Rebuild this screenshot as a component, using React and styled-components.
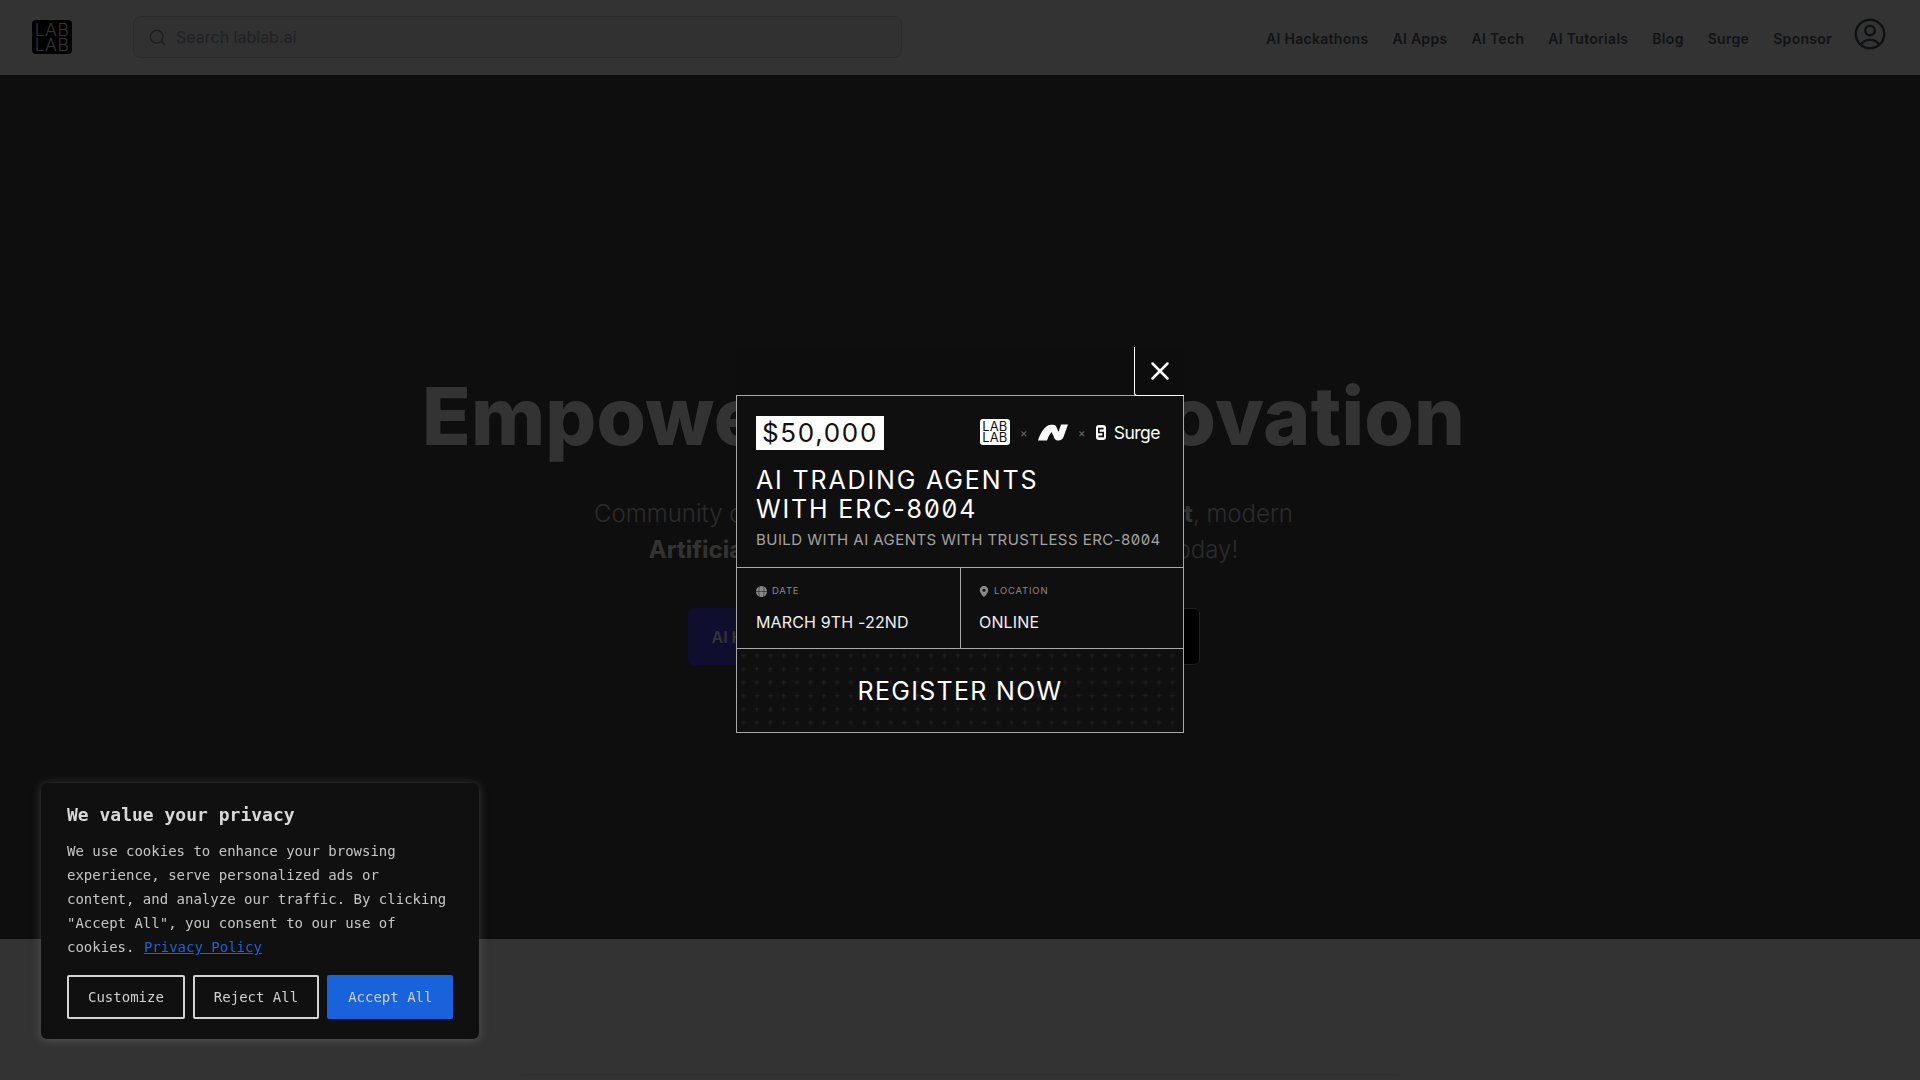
import React from "react";
import styled, { createGlobalStyle } from "styled-components";
import { HiOutlineUserCircle } from "react-icons/hi2";
import { Search, X } from "lucide-react";

const GlobalStyle = createGlobalStyle`
  * { box-sizing: border-box; }
  html, body { margin: 0; height: 100%; overflow: hidden; }
  body { font-family: "Inter", "Liberation Sans", sans-serif; background: #fff; }
`;

const navItems = ["AI Hackathons", "AI Apps", "AI Tech", "AI Tutorials", "Blog", "Surge", "Sponsor"];

function App() {
  return (
    <>
      <GlobalStyle />
      <Page>
        <Header>
          <HeaderLogo>
            <span>LAB</span>
            <span>LAB</span>
          </HeaderLogo>
          <SearchBox>
            <Search size={19} strokeWidth={1.75} />
            <span>Search lablab.ai</span>
          </SearchBox>
          <Nav>
            {navItems.map((item) => (
              <NavLink key={item}>{item}</NavLink>
            ))}
          </Nav>
          <Avatar>
            <HiOutlineUserCircle size={38} />
          </Avatar>
        </Header>
        <Hero>
          <HeroTitle>Empowering AI Innovation</HeroTitle>
          <HeroText>
            Community of makers learning to build with the <b>latest</b>, modern
            <br />
            <b>Artificial Intelligence</b> tools. Join us, and build today!
          </HeroText>
          <HeroButtons>
            <HeroButton $primary>AI Hackathons</HeroButton>
            <HeroButton>AI Tutorials</HeroButton>
          </HeroButtons>
        </Hero>
        <Lower>
          <LowerCard />
        </Lower>
      </Page>

      <Overlay>
        <ModalWrap>
          <CloseRow>
            <CloseButton aria-label="Close">
              <X size={30} strokeWidth={2} />
            </CloseButton>
          </CloseRow>
          <Modal>
            <Intro>
              <TopRow>
                <Prize>$50,000</Prize>
                <Logos>
                  <SmallLogo>
                    <span>LAB</span>
                    <span>LAB</span>
                  </SmallLogo>
                  <Times>×</Times>
                  <svg width="30" height="17" viewBox="0 0 30 16" fill="#fff">
                    <path d="M0 16C1.5 10 6 3 9.5 1.2C12 0 16.5 -.3 18 1.5L20.5 7.5L23 0H30L25.5 12.5C24.5 15.5 21 16.8 18 15.5C16.5 14.8 16 13 15.5 11.5L13.5 7.5C11.5 10 10 13 9 16Z" />
                  </svg>
                  <Times>×</Times>
                  <SurgeLogo>
                    <svg width="10" height="15" viewBox="0 0 10 15">
                      <rect width="10" height="15" rx="3" fill="#fff" />
                      <path d="M7.6 3.6H2.8V7.5H7.2V11.4H2.4" fill="none" stroke="#0f0f0f" strokeWidth="1.6" />
                    </svg>
                    <span>Surge</span>
                  </SurgeLogo>
                </Logos>
              </TopRow>
              <ModalTitle>
                AI TRADING AGENTS
                <br />
                WITH ERC-8004
              </ModalTitle>
              <ModalSub>BUILD WITH AI AGENTS WITH TRUSTLESS ERC-8004</ModalSub>
            </Intro>
            <Details>
              <Detail>
                <DetailLabel>
                  <svg width="11" height="11" viewBox="0 0 11 11">
                    <circle cx="5.5" cy="5.5" r="5.5" fill="#8a8a8a" />
                    <path d="M0 5.5H11M3.6 .5C2.6 3.5 2.6 7.5 3.6 10.5M7.4 .5C8.4 3.5 8.4 7.5 7.4 10.5" fill="none" stroke="#0f0f0f" strokeWidth=".5" />
                  </svg>
                  DATE
                </DetailLabel>
                <DetailValue>MARCH 9TH -22ND</DetailValue>
              </Detail>
              <Detail>
                <DetailLabel>
                  <svg width="10" height="11" viewBox="0 0 10 12">
                    <path fillRule="evenodd" fill="#8a8a8a" d="M5 0a4.6 4.6 0 0 1 4.6 4.6C9.6 7.8 5 12 5 12S.4 7.8.4 4.6A4.6 4.6 0 0 1 5 0Zm0 3a1.7 1.7 0 1 0 0 3.4A1.7 1.7 0 0 0 5 3Z" />
                  </svg>
                  LOCATION
                </DetailLabel>
                <DetailValue>ONLINE</DetailValue>
              </Detail>
            </Details>
            <Register>
              <PlusGrid width="100%" height="100%">
                <defs>
                  <pattern id="plus" width="13.4" height="13.4" patternUnits="userSpaceOnUse">
                    <path d="M4 6.5H9M6.5 4V9" stroke="#212121" strokeWidth="1" />
                  </pattern>
                </defs>
                <rect width="100%" height="100%" fill="url(#plus)" />
              </PlusGrid>
              <RegisterLabel>REGISTER NOW</RegisterLabel>
            </Register>
          </Modal>
        </ModalWrap>
      </Overlay>

      <CookieCard>
        <CookieTitle>We value your privacy</CookieTitle>
        <CookieText>
          We use cookies to enhance your browsing experience, serve personalized ads or content,
          and analyze our traffic. By clicking "Accept All", you consent to our use of cookies.{" "}
          <a href="#privacy">Privacy Policy</a>
        </CookieText>
        <CookieButtons>
          <CookieButton>Customize</CookieButton>
          <CookieButton>Reject All</CookieButton>
          <CookieButton $accept>Accept All</CookieButton>
        </CookieButtons>
      </CookieCard>
    </>
  );
}

export default App;

const Page = styled.div`
  display: flex;
  flex-direction: column;
  height: 1080px;
  overflow: hidden;
`;

const Header = styled.header`
  height: 75px;
  flex-shrink: 0;
  background: #fff;
  display: flex;
  align-items: center;
  padding: 0 32px 1px;
`;

const HeaderLogo = styled.div`
  width: 40px;
  height: 34px;
  background: #000;
  border-radius: 4px;
  color: #fff;
  display: flex;
  flex-direction: column;
  align-items: center;
  justify-content: center;
  font-size: 17.5px;
  font-weight: 300;
  line-height: 15px;
  letter-spacing: 0.5px;
`;

const SearchBox = styled.div`
  width: 769px;
  height: 42px;
  margin-left: 61px;
  border: 1px solid #d1d5db;
  border-radius: 8px;
  background: #f3f3f3;
  color: #9ca3af;
  display: flex;
  align-items: center;
  gap: 9px;
  padding-left: 14px;
  font-size: 16px;
  svg {
    color: #8b8f96;
  }
`;

const Nav = styled.nav`
  margin-left: auto;
  display: flex;
  gap: 24px;
  padding-top: 3px;
`;

const NavLink = styled.a`
  font-size: 14px;
  font-weight: 600;
  letter-spacing: 0.3px;
  color: #5a5f6a;
`;

const Avatar = styled.div`
  color: #50545c;
  margin-left: 19px;
  margin-right: -1px;
  margin-top: -6px;
  display: flex;
`;

const Hero = styled.section`
  height: 864px;
  flex-shrink: 0;
  background: #464646;
  display: flex;
  flex-direction: column;
  align-items: center;
  padding: 293px 33px 0 0;
`;

const HeroTitle = styled.h1`
  margin: 0;
  font-size: 80px;
  line-height: 96px;
  font-weight: 800;
  letter-spacing: 0.2px;
  color: #fff;
  white-space: nowrap;
`;

const HeroText = styled.p`
  margin: 32px 0 0;
  font-size: 24px;
  line-height: 36px;
  font-weight: 300;
  color: #d4d4d4;
  text-align: center;
  white-space: nowrap;
  b {
    font-weight: 700;
    color: #fff;
  }
`;

const HeroButtons = styled.div`
  margin-top: 40px;
  display: flex;
  gap: 18px;
`;

const HeroButton = styled.a`
  width: 247px;
  height: 57px;
  border-radius: 6px;
  display: flex;
  align-items: center;
  padding-left: 24px;
  font-size: 16px;
  font-weight: 600;
  color: #fff;
  background: ${(p) => (p.$primary ? "#4f46e5" : "#000")};
  border: ${(p) => (p.$primary ? "none" : "1px solid #9ca3af")};
`;

const Lower = styled.section`
  flex: 1;
  background: #fff;
  padding-top: 135px;
  display: flex;
  justify-content: center;
`;

const LowerCard = styled.div`
  width: 886px;
  height: 100px;
  border-top: 1px solid #e5e7eb;
  border-radius: 8px 8px 0 0;
`;

const Overlay = styled.div`
  position: fixed;
  inset: 0;
  z-index: 10;
  background: rgba(0, 0, 0, 0.8);
  display: flex;
  align-items: center;
  justify-content: center;
`;

const ModalWrap = styled.div`
  width: 448px;
  background: #0d0d0d;
`;

const CloseRow = styled.div`
  display: flex;
  justify-content: flex-end;
  height: 48px;
`;

const CloseButton = styled.button`
  width: 50px;
  height: 49px;
  background: transparent;
  border: solid #fff;
  border-width: 0 0 1px 1px;
  border-bottom-left-radius: 3px;
  color: #fff;
  padding: 0;
  position: relative;
  z-index: 1;
  display: flex;
  align-items: center;
  justify-content: center;
`;

const Modal = styled.div`
  border: 1px solid #a9a9a9;
  background: #0f0f0f;
  color: #fff;
  font-feature-settings: "zero";
`;

const Intro = styled.div`
  height: 171px;
  padding: 20px 23px 0 19px;
`;

const TopRow = styled.div`
  display: flex;
  justify-content: space-between;
  align-items: center;
`;

const Prize = styled.div`
  height: 34px;
  width: 128px;
  background: #fff;
  color: #111;
  font-size: 26px;
  line-height: 34px;
  letter-spacing: 1.7px;
  text-align: center;
  font-feature-settings: normal;
`;

const Logos = styled.div`
  display: flex;
  align-items: center;
  gap: 10px;
  padding-bottom: 2px;
`;

const SmallLogo = styled.div`
  width: 30px;
  height: 26px;
  background: #fff;
  border-radius: 3px;
  color: #111;
  display: flex;
  flex-direction: column;
  align-items: center;
  justify-content: center;
  font-size: 13px;
  line-height: 11px;
`;

const Times = styled.span`
  color: #666;
  font-size: 12px;
`;

const SurgeLogo = styled.div`
  display: flex;
  align-items: center;
  gap: 8px;
  font-size: 17.5px;
  font-weight: 400;
  letter-spacing: -0.5px;
`;

const ModalTitle = styled.h2`
  margin: 16px 0 0;
  font-size: 25px;
  line-height: 29px;
  font-weight: 400;
  letter-spacing: 1.85px;
`;

const ModalSub = styled.p`
  margin: 6px 0 0;
  font-size: 15px;
  line-height: 20px;
  letter-spacing: 0.45px;
  color: #a3a3a3;
  white-space: nowrap;
`;

const Details = styled.div`
  display: grid;
  grid-template-columns: 223px 1fr;
  height: 82px;
  border-top: 1px solid #a9a9a9;
  border-bottom: 1px solid #a9a9a9;
`;

const Detail = styled.div`
  padding: 16px 19px 0;
  & + & {
    border-left: 1px solid #a9a9a9;
    padding-left: 18px;
  }
`;

const DetailLabel = styled.div`
  display: flex;
  align-items: center;
  gap: 5px;
  font-size: 9.5px;
  line-height: 14px;
  letter-spacing: 0.8px;
  color: #8a8a8a;
`;

const DetailValue = styled.div`
  margin-top: 13px;
  font-size: 16px;
  line-height: 22px;
  letter-spacing: 0.15px;
  color: #f0f0f0;
`;

const Register = styled.div`
  position: relative;
  height: 83px;
  display: flex;
  align-items: center;
  justify-content: center;
`;

const PlusGrid = styled.svg`
  position: absolute;
  inset: 0;
`;

const RegisterLabel = styled.span`
  position: relative;
  font-size: 25px;
  letter-spacing: 1.3px;
`;

const CookieCard = styled.div`
  position: fixed;
  left: 41px;
  bottom: 41px;
  z-index: 20;
  width: 438px;
  height: 256px;
  padding: 20px 26px;
  background: #101010;
  border-radius: 6px;
  box-shadow: 0 1px 10px rgba(172, 171, 171, 0.3);
  font-family: "DejaVu Sans Mono", monospace;
  color: #c6c6c6;
`;

const CookieTitle = styled.div`
  font-size: 18px;
  line-height: 24px;
  font-weight: 700;
  color: #d8d8d8;
`;

const CookieText = styled.p`
  margin: 12px 0 0;
  font-size: 14px;
  line-height: 24px;
  a {
    color: #1863dc;
    margin-left: 1px;
  }
`;

const CookieButtons = styled.div`
  margin-top: 16px;
  display: flex;
  gap: 8px;
`;

const CookieButton = styled.button`
  height: 44px;
  padding: 0 19px;
  border-radius: 2px;
  border: 2px solid ${(p) => (p.$accept ? "#1863dc" : "#d4d4d4")};
  background: ${(p) => (p.$accept ? "#1863dc" : "transparent")};
  color: #d0d0d0;
  font-family: inherit;
  font-size: 14px;
  white-space: nowrap;
  flex-shrink: 0;
`;
